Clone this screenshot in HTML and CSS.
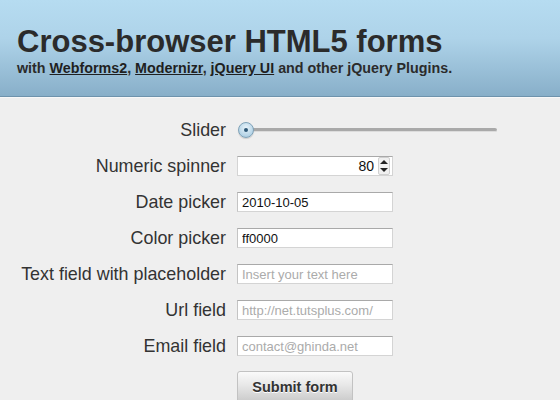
FILE: index.html
```html
<!DOCTYPE html>
<html>
<head>
<meta charset="utf-8">
<link rel="stylesheet" href="styles.css">
</head>
<body>
<header class="masthead">
  <h1 class="title">Cross-browser HTML5 forms</h1>
  <p class="subtitle">with <a href="#">Webforms2</a>, <a href="#">Modernizr</a>, <a href="#">jQuery UI</a> and other jQuery Plugins.</p>
</header>
<form class="form">
  <div class="row">
    <label class="label">Slider</label>
    <div class="slider">
      <div class="track"></div>
      <div class="handle"><span class="dot"></span></div>
    </div>
  </div>
  <div class="row">
    <label class="label">Numeric spinner</label>
    <div class="spinner">
      <input class="field num" type="text" value="80">
      <div class="spin">
        <span class="arrow up"></span>
        <span class="arrow down"></span>
      </div>
    </div>
  </div>
  <div class="row">
    <label class="label">Date picker</label>
    <input class="field" type="text" value="2010-10-05">
  </div>
  <div class="row">
    <label class="label">Color picker</label>
    <input class="field" type="text" value="ff0000">
  </div>
  <div class="row">
    <label class="label">Text field with placeholder</label>
    <input class="field" type="text" placeholder="Insert your text here">
  </div>
  <div class="row">
    <label class="label">Url field</label>
    <input class="field" type="text" placeholder="http://net.tutsplus.com/">
  </div>
  <div class="row">
    <label class="label">Email field</label>
    <input class="field" type="text" placeholder="contact@ghinda.net">
  </div>
  <div class="row submit-row">
    <span class="label"></span>
    <button class="button" type="button">Submit form</button>
  </div>
</form>
</body>
</html>
```
FILE: styles.css
```css
html, body {
  margin: 0;
  padding: 0;
  background: #efefef;
  font-family: "Liberation Sans", Arial, sans-serif;
  color: #333;
  overflow: hidden;
}
.masthead {
  height: 97px;
  box-sizing: border-box;
  padding: 26px 0 0 17px;
  background: linear-gradient(#b6dcf1, #aed3e9 40%, #88afc9);
  border-bottom: 1px solid #6e93ac;
  box-shadow: 0 1px 0 #f8f8f8;
}
.title {
  margin: 0;
  font-size: 31px;
  line-height: 31px;
  font-weight: bold;
  color: #2b2b2b;
}
.subtitle {
  margin: 3px 0 0 0;
  font-size: 14.3px;
  line-height: 16px;
  font-weight: bold;
  color: #2b2b2b;
}
.subtitle a {
  color: #1f1f1f;
  text-decoration: underline;
}
.form {
  padding-top: 15px;
}
.row {
  display: flex;
  align-items: center;
  height: 36px;
}
.label {
  width: 226px;
  flex: none;
  text-align: right;
  font-size: 17.9px;
  color: #333;
  margin-right: 11px;
}
.field {
  box-sizing: border-box;
  width: 156px;
  height: 20px;
  margin: 0;
  padding: 0 4px;
  border: 1px solid #d4d4d4;
  border-top-color: #a9a9a9;
  border-left-color: #c4c4c4;
  background: #fff;
  font-family: "Liberation Sans", Arial, sans-serif;
  font-size: 13px;
  color: #111;
  outline: none;
}
.field::placeholder {
  color: #ababab;
}
.slider {
  position: relative;
  width: 260px;
  height: 18px;
  display: flex;
  align-items: center;
}
.track {
  margin-left: 14px;
  flex: 1;
  height: 3px;
  background: #a9a9a9;
  border-bottom: 1px solid #dcdcdc;
  border-radius: 2px;
}
.handle {
  position: absolute;
  left: 1px;
  top: 1px;
  width: 16px;
  height: 16px;
  box-sizing: border-box;
  border-radius: 50%;
  border: 1px solid #7fa2b8;
  background: radial-gradient(circle at 50% 35%, #e8f4fb, #b4d3e6 70%, #9dbfd4);
  display: flex;
  align-items: center;
  justify-content: center;
  box-shadow: 0 1px 1px rgba(0,0,0,0.15);
}
.dot {
  width: 4px;
  height: 4px;
  border-radius: 50%;
  background: #2d5877;
}
.spinner {
  display: flex;
  align-items: center;
  width: 156px;
  height: 20px;
  box-sizing: border-box;
  border: 1px solid #d4d4d4;
  border-top-color: #a9a9a9;
  background: #fff;
}
.spinner .num {
  width: 0;
  min-width: 0;
  flex: 1;
  height: 18px;
  border: none;
  text-align: right;
  font-size: 14px;
  padding-right: 4px;
}
.spin {
  width: 12px;
  height: 18px;
  margin-right: 2px;
  display: flex;
  flex-direction: column;
  justify-content: space-between;
  align-items: center;
  background: #f0f0f0;
  border: 1px solid #d0d0d0;
  border-radius: 2px;
  box-sizing: border-box;
  padding: 2px 0;
}
.arrow {
  width: 0;
  height: 0;
  border-left: 4px solid transparent;
  border-right: 4px solid transparent;
}
.arrow.up {
  border-bottom: 4px solid #222;
}
.arrow.down {
  border-top: 4px solid #222;
}
.submit-row {
  height: auto;
  margin-top: 7px;
  align-items: flex-start;
}
.button {
  width: 116px;
  height: 34px;
  margin: 0;
  padding: 0 0 2px 0;
  border: 1px solid #c2c2c2;
  border-radius: 3px;
  background: linear-gradient(#fafafa, #e8e8e8 40%, #c6c6c6);
  font-family: "Liberation Sans", Arial, sans-serif;
  font-size: 14.5px;
  font-weight: bold;
  color: #333;
  text-shadow: 0 1px 0 #fff;
}
```
